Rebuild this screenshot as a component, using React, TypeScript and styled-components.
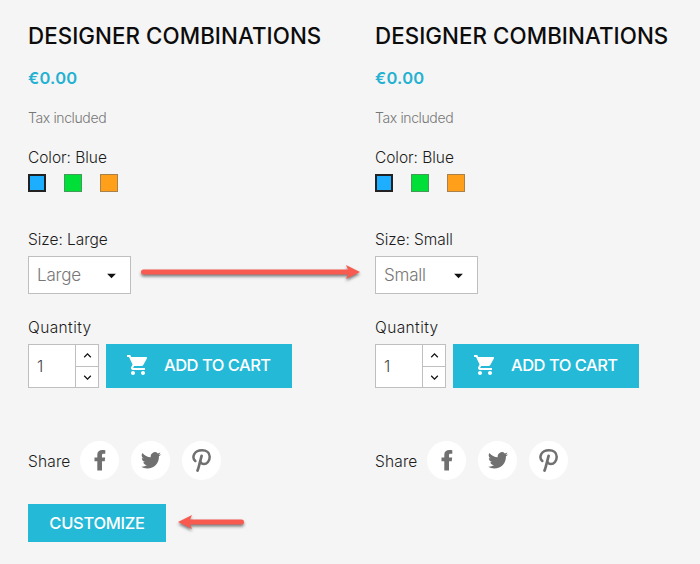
import React from 'react';
import styled, { createGlobalStyle } from 'styled-components';
import { MdShoppingCart, MdKeyboardArrowUp, MdKeyboardArrowDown, MdArrowDropDown } from 'react-icons/md';

const GlobalStyle = createGlobalStyle`
  * { box-sizing: border-box; }
  body {
    margin: 0;
    background: #f5f5f5;
    color: #1c1c1c;
    font-family: Inter, "Liberation Sans", sans-serif;
    font-weight: 300;
  }
`;

const Page = styled.main`
  display: grid;
  grid-template-columns: 347px 1fr;
  height: 564px;
  padding-left: 28px;
  overflow: hidden;
  background: #f5f5f5;
`;

const Product = styled.section`
  display: flex;
  flex-direction: column;
  align-items: flex-start;
  min-width: 0;
`;

const Title = styled.h1`
  margin: 21px 0 0;
  font-size: 22.3px;
  line-height: 30px;
  font-weight: 500;
  letter-spacing: 0.08px;
  white-space: nowrap;
  color: #0c0c0c;
`;

const Price = styled.div`
  margin-top: 17px;
  font-size: 16.5px;
  line-height: 20px;
  font-weight: 600;
  letter-spacing: 0.25px;
  color: #24b1d2;
`;

const Tax = styled.div`
  margin-top: 20px;
  font-size: 14px;
  line-height: 20px;
  letter-spacing: -0.38px;
  color: #777;
`;

const Label = styled.div<{ $top: number; $spacing?: number }>`
  margin-top: ${(p) => p.$top}px;
  font-size: 15.5px;
  line-height: 20px;
  letter-spacing: ${(p) => p.$spacing ?? 0}px;
  white-space: nowrap;
`;

const Swatches = styled.div`
  display: flex;
  gap: 18px;
  margin-top: 6px;
`;

const Swatch = styled.span<{ $color: string; $active?: boolean }>`
  width: 18px;
  height: 18px;
  background: ${(p) => p.$color};
  border: ${(p) => (p.$active ? '2px solid #222' : '1px solid rgba(110, 110, 110, 0.6)')};
`;

const SizeRow = styled.div`
  display: flex;
  align-items: center;
  height: 38px;
  margin-top: 6px;
`;

const Select = styled.div`
  display: flex;
  align-items: center;
  justify-content: space-between;
  width: 103px;
  height: 38px;
  padding: 0 8px;
  border: 1px solid #bfbfbf;
  background: #fff;
  color: #777;
  font-size: 17px;
  letter-spacing: -0.2px;
  svg { color: #111; }
`;

const BuyRow = styled.div`
  display: flex;
  gap: 7px;
  height: 44px;
  margin-top: 6px;
`;

const Quantity = styled.div`
  display: grid;
  grid-template-columns: 46px 1fr;
  width: 71px;
  height: 44px;
  border: 1px solid #bfbfbf;
  background: #fff;
`;

const Amount = styled.span`
  padding-left: 8px;
  font-size: 16px;
  line-height: 42px;
  color: #444;
`;

const Stepper = styled.div`
  display: grid;
  grid-template-rows: 21px 21px;
  border-left: 1px solid #bfbfbf;
`;

const Step = styled.span<{ $divided?: boolean }>`
  display: grid;
  place-items: center;
  border-top: ${(p) => (p.$divided ? '1px solid #bfbfbf' : '0')};
  color: #111;
`;

const CartButton = styled.div`
  display: flex;
  align-items: center;
  width: 186px;
  height: 44px;
  padding: 0 0 2px 20px;
  background: #24b9d7;
  color: #fff;
  font-size: 16.5px;
  font-weight: 500;
  letter-spacing: -0.5px;
  white-space: nowrap;
  svg { margin-right: 14px; }
`;

const ShareRow = styled.div`
  display: flex;
  align-items: center;
  height: 40px;
  margin-top: 52px;
  font-size: 15.5px;
  letter-spacing: 0.15px;
`;

const ShareLabel = styled.span`
  width: 52px;
  padding-top: 3px;
`;

const Social = styled.span`
  display: grid;
  place-items: center;
  width: 39px;
  height: 39px;
  margin-right: 12px;
  border-radius: 50%;
  background: #fff;
  color: #707070;
`;

const CustomizeRow = styled.div`
  display: flex;
  align-items: center;
  margin-top: 24px;
`;

const CustomizeButton = styled.div`
  width: 138px;
  height: 38px;
  background: #24b9d7;
  color: #fff;
  font-size: 16.5px;
  font-weight: 500;
  letter-spacing: -0.3px;
  line-height: 38px;
  text-align: center;
`;

const ArrowGraphic = styled.svg<{ $gap: number }>`
  flex: none;
  display: block;
  margin-left: ${(p) => p.$gap}px;
  overflow: visible;
  filter: drop-shadow(0 2px 1.5px rgba(0, 0, 0, 0.5));
`;

const ArrowLift = styled.span<{ $by: number }>`
  display: flex;
  padding-bottom: ${(p) => p.$by}px;
`;

function FacebookIcon() {
  return (
    <svg width="12" height="21" viewBox="0 0 12 21" fill="currentColor">
      <path d="M11.3.3v3.500H9.400C8.200 3.800 8 4.400 8 5.300v2.200h3.200l-.5 3.700H8V20.500H3.300v-9.300H.5V7.500h2.800V4.700C3.300 1.700 5.400.1 8.400.1c1.300 0 2.500.1 2.900.2z" />
    </svg>
  );
}

function TwitterIcon() {
  return (
    <svg width="20" height="17" viewBox="0 0 24 20" fill="currentColor">
      <path d="M24 2.400c-.9.400-1.800.7-2.800.8A4.900 4.900 0 0 0 23.300.5c-1 .6-2 1-3.100 1.200A4.900 4.900 0 0 0 11.800 6.200 14 14 0 0 1 1.700 1a4.900 4.900 0 0 0 1.500 6.600C2.400 7.600 1.600 7.400 1 7v.1c0 2.400 1.700 4.400 3.900 4.800-.7.200-1.500.2-2.200.1.600 2 2.400 3.400 4.600 3.400A9.900 9.900 0 0 1 0 17.500 14 14 0 0 0 7.500 19.700c9.100 0 14.400-7.700 14-14.700 1-.7 1.800-1.600 2.500-2.600z" />
    </svg>
  );
}

function PinterestIcon() {
  return (
    <svg width="19" height="23" viewBox="0 0 19 23" fill="none" stroke="currentColor" strokeLinecap="round">
      <path d="M3.300 12C1.500 10.500.9 8 2.200 5.300 3.700 2.300 6.800 1.300 10 1.300c4.500 0 7.700 2.600 7.700 6.400 0 4.300-2.600 7.300-5.800 7.300-1.700 0-2.900-.8-3.400-2" strokeWidth="2.500" />
      <path d="M9.600 6.800 6.700 18c-.4 1.600-.7 2.500-1.200 3.600" strokeWidth="2.700" />
    </svg>
  );
}

function RightArrow() {
  return (
    <ArrowLift $by={6}>
      <ArrowGraphic $gap={10} width="219" height="16" viewBox="0 0 219 16">
        <path d="M2.500 5.500H207L205 1l14 7-14 7 2-4.500H2.500a2.500 2.500 0 0 1 0-5z" fill="#f95a50" />
      </ArrowGraphic>
    </ArrowLift>
  );
}

function LeftArrow() {
  return (
    <ArrowLift $by={2}>
      <ArrowGraphic $gap={12} width="66" height="16" viewBox="0 0 66 16">
        <path d="M63.500 5.500H12L14 1 0 8l14 7-2-4.500h51.500a2.500 2.500 0 0 0 0-5z" fill="#f95a50" />
      </ArrowGraphic>
    </ArrowLift>
  );
}

interface ProductPanelProps {
  size: string;
  customizable?: boolean;
}

function ProductPanel({ size, customizable }: ProductPanelProps) {
  return (
    <Product>
      <Title>DESIGNER COMBINATIONS</Title>
      <Price>€0.00</Price>
      <Tax>Tax included</Tax>
      <Label $top={20} $spacing={-0.05}>Color: Blue</Label>
      <Swatches>
        <Swatch $color="#1eaeff" $active />
        <Swatch $color="#00df38" />
        <Swatch $color="#ff9f1a" />
      </Swatches>
      <Label $top={38} $spacing={-0.05}>Size: {size}</Label>
      <SizeRow>
        <Select>
          {size}
          <MdArrowDropDown size={21} />
        </Select>
        {customizable && <RightArrow />}
      </SizeRow>
      <Label $top={24} $spacing={0.4}>Quantity</Label>
      <BuyRow>
        <Quantity>
          <Amount>1</Amount>
          <Stepper>
            <Step><MdKeyboardArrowUp size={15} /></Step>
            <Step $divided><MdKeyboardArrowDown size={15} /></Step>
          </Stepper>
        </Quantity>
        <CartButton>
          <MdShoppingCart size={24} />
          ADD TO CART
        </CartButton>
      </BuyRow>
      <ShareRow>
        <ShareLabel>Share</ShareLabel>
        <Social><FacebookIcon /></Social>
        <Social><TwitterIcon /></Social>
        <Social><PinterestIcon /></Social>
      </ShareRow>
      {customizable && (
        <CustomizeRow>
          <CustomizeButton>CUSTOMIZE</CustomizeButton>
          <LeftArrow />
        </CustomizeRow>
      )}
    </Product>
  );
}

export default function App() {
  return (
    <>
      <GlobalStyle />
      <Page>
        <ProductPanel size="Large" customizable />
        <ProductPanel size="Small" />
      </Page>
    </>
  );
}
